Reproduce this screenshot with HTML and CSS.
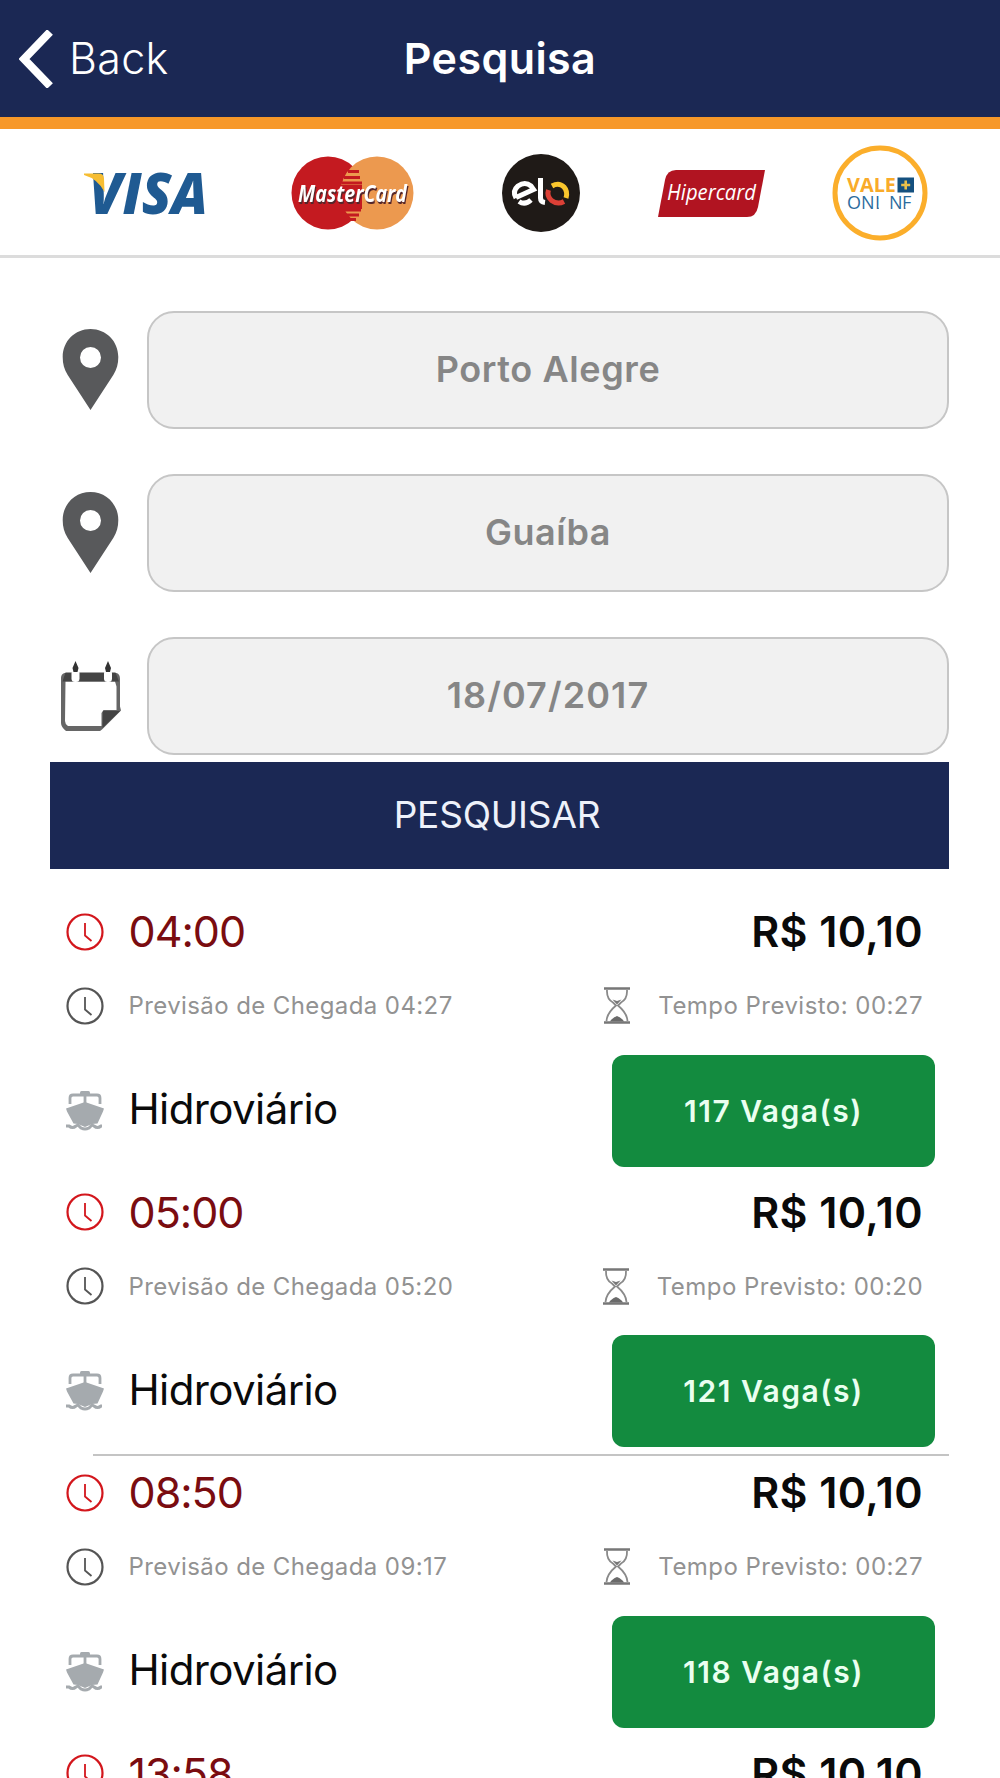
FILE: index.html
```html
<!DOCTYPE html>
<html lang="pt-BR">
<head>
<meta charset="utf-8">
<title>Pesquisa</title>
<link rel="stylesheet" href="styles.css">
</head>
<body>
<svg class="sprite" aria-hidden="true">
  <symbol id="pin" viewBox="0 0 56 82">
    <path fill-rule="evenodd" d="M28 0C12.500 0 .2 12 .2 28c0 7 1.500 12 5 18L28 81l22.800-35c3.500-6 5-11 5-18C55.800 12 43.500 0 28 0zM28 18a10.500 10.500 0 1 1 0 21a10.500 10.500 0 1 1 0-21z"/>
  </symbol>
  <symbol id="calendar" viewBox="0 0 62 70">
    <path d="M4.500 12h52q3.500 1 3.500 6v27.500l1 4L42 68.500 40 70H6Q1 66 1 62V17q0-4 3.500-5z" fill="#666"/>
    <path d="M5.500 20.500h49.500l1.500 5V49H43.500l-2 3v13H8Q5 63 5 60z" fill="#fff"/>
    <path d="M5.500 11.500h50l3.500 9H2.500z" fill="#444"/>
    <path d="M43 50h17L42.500 67z" fill="#444"/>
    <rect x="11.500" y="9" width="8" height="12" rx="3.500" fill="#fff"/>
    <rect x="44" y="9" width="8" height="12" rx="3.500" fill="#fff"/>
    <path d="M15.500 0l3 7-1 4h-4l-1-4zM48 0l3 7-1 4h-4l-1-4z" fill="#333"/>
  </symbol>
  <symbol id="clock" viewBox="0 0 38 38">
    <circle cx="19" cy="19" r="17.500" fill="none" stroke="currentColor" stroke-width="2.200"/>
    <path d="M19 10v12.500l6.500 5.500" fill="none" stroke="currentColor" stroke-width="1.800"/>
  </symbol>
  <symbol id="hourglass" viewBox="0 0 26 37">
    <path d="M0 1.500h26M0 35.500h26" stroke="#777" stroke-width="2.600"/>
    <path d="M3 3Q2.500 12 9 15.500l3 3Q3 26 2.500 34M23 3Q23.500 12 17 15.500l-3 3Q23 26 23.500 34" fill="none" stroke="#8a8a8a" stroke-width="1.800"/>
    <path d="M8.500 12.500l4.500 1.500 4.500-1.500-4.500 5z" fill="#777"/>
    <path d="M6 34.500Q8 31 13 29q5 2 7 5.500z" fill="#6a6a6a"/>
  </symbol>
  <symbol id="boat" viewBox="0 0 38 40">
    <path d="M4 13V7q0-3 3-3h24q3 0 3 3v6M19 3v10" fill="none" stroke="currentColor" stroke-width="2.800"/>
    <rect x="14" y="0" width="10" height="5" rx="1.500" fill="currentColor"/>
    <path d="M0 17.500L19 11l19 6.500-1 3-5.500 12L26 33l-7 3-7-3-4.500-.5L1 20.500z" fill="currentColor"/>
    <path d="M0 35h3q3.500 3 7 0l2-1 3 3q4 2 8 0l3-3 2 1q3.500 3 7 0h1" fill="none" stroke="currentColor" stroke-width="3"/>
  </symbol>
</svg>

<header class="topbar">
  <a class="back"><svg class="chevron" viewBox="0 0 34 58"><path d="M31 2L5 29l26 27" fill="none" stroke="#fff" stroke-width="8"/></svg><span class="back-text">Back</span></a>
  <h1 class="title">Pesquisa</h1>
</header>

<section class="cards">
  <svg class="visa" viewBox="0 0 120 41">
    <text class="visa-word" x="5" y="41" textLength="119" lengthAdjust="spacingAndGlyphs">VISA</text>
    <path d="M0 .5h15q4.500 0 5 5L20.500 19Q14 6 0 2z" fill="#f6bd32"/>
  </svg>
  <svg class="mastercard" viewBox="0 0 123 74">
    <circle cx="37" cy="37" r="36.500" fill="#c41a20"/>
    <circle cx="86" cy="37" r="36.500" fill="#ec994f"/>
    <path d="M57 15.500h11M53 21.500h16M51 27h20M52 54h18M55 59h13M59 63.500h6" stroke="#c41a20" stroke-width="2.800"/>
    <path d="M50 29h21v24H50z" fill="#c41a20"/>
    <text class="mc-word" x="7" y="46" textLength="109" lengthAdjust="spacingAndGlyphs">MasterCard</text>
  </svg>
  <svg class="elo" viewBox="0 0 78 78">
    <circle cx="39" cy="39" r="39" fill="#1f1a17"/>
    <g fill="none" stroke-width="5">
      <path d="M14 44Q10 37 16 32q7-5 13 0l2.500 3.500L14 43.500M17 47.500q6 4 12-1.500" stroke="#fff"/>
      <path d="M38.500 24v20q0 4 4.500 4.500" stroke="#fff"/>
      <path d="M50 32q7-4 12 1 4 4.500 2 11" stroke="#fac62d"/>
      <path d="M46.500 36q-2 6 3 10.500 6 4.500 12.500 1" stroke="#dc4036"/>
    </g>
  </svg>
  <svg class="hipercard" viewBox="0 0 107 47">
    <path d="M18 0h89l-7 37q-2 10-11 10H0L7 10Q9 0 18 0z" fill="#b11421"/>
    <text class="hiper-word" x="9" y="30" textLength="89" lengthAdjust="spacingAndGlyphs">Hipercard</text>
  </svg>
  <svg class="vale" viewBox="0 0 96 96">
    <circle cx="48" cy="48" r="45" fill="none" stroke="#fbae2b" stroke-width="5"/>
    <text class="vale-word" x="15" y="46.500" textLength="49" lengthAdjust="spacingAndGlyphs">VALE</text>
    <rect x="65.500" y="32.500" width="16.500" height="15" fill="#14507f"/>
    <path d="M73.700 35.500v9M69.200 40h9" stroke="#e9c04a" stroke-width="2.600"/>
    <text class="online-word" x="15 29 43 51 57 70" y="64">ONLINE</text>
    <path d="M46.800 60.500h4.700v5h-4.700zM51.500 49h4.500v16h-4.500zM73.500 61h9v4h-9z" fill="#fff"/>
  </svg>
</section>

<form class="search">
  <div class="field"><svg class="pin"><use href="#pin"/></svg><div class="box">Porto Alegre</div></div>
  <div class="field"><svg class="pin"><use href="#pin"/></svg><div class="box">Guaíba</div></div>
  <div class="field"><svg class="calendar"><use href="#calendar"/></svg><div class="box date">18/07/2017</div></div>
  <button class="submit" type="button">PESQUISAR</button>
</form>

<main class="trips">
  <article class="trip">
    <div class="row"><svg class="clock red"><use href="#clock"/></svg><span class="time">04:00</span><span class="price">R$ 10,10</span></div>
    <div class="row info"><svg class="clock"><use href="#clock"/></svg><span class="arrival">Previsão de Chegada 04:27</span><svg class="hourglass"><use href="#hourglass"/></svg><span class="duration">Tempo Previsto: 00:27</span></div>
    <div class="row mode"><svg class="boat"><use href="#boat"/></svg><span class="mode-name">Hidroviário</span><button class="seats" type="button">117 Vaga(s)</button></div>
  </article>
  <article class="trip divided">
    <div class="row"><svg class="clock red"><use href="#clock"/></svg><span class="time">05:00</span><span class="price">R$ 10,10</span></div>
    <div class="row info"><svg class="clock"><use href="#clock"/></svg><span class="arrival">Previsão de Chegada 05:20</span><svg class="hourglass"><use href="#hourglass"/></svg><span class="duration">Tempo Previsto: 00:20</span></div>
    <div class="row mode"><svg class="boat"><use href="#boat"/></svg><span class="mode-name">Hidroviário</span><button class="seats" type="button">121 Vaga(s)</button></div>
  </article>
  <article class="trip">
    <div class="row"><svg class="clock red"><use href="#clock"/></svg><span class="time">08:50</span><span class="price">R$ 10,10</span></div>
    <div class="row info"><svg class="clock"><use href="#clock"/></svg><span class="arrival">Previsão de Chegada 09:17</span><svg class="hourglass"><use href="#hourglass"/></svg><span class="duration">Tempo Previsto: 00:27</span></div>
    <div class="row mode"><svg class="boat"><use href="#boat"/></svg><span class="mode-name">Hidroviário</span><button class="seats" type="button">118 Vaga(s)</button></div>
  </article>
  <article class="trip">
    <div class="row"><svg class="clock red"><use href="#clock"/></svg><span class="time">13:58</span><span class="price">R$ 10,10</span></div>
  </article>
</main>
</body>
</html>
```
FILE: styles.css
```css
* { box-sizing: border-box; }
body {
  display: flex;
  flex-direction: column;
  margin: 0;
  width: 1000px;
  height: 1778px;
  overflow: hidden;
  background: #fff;
  font-family: Inter, "Liberation Sans", sans-serif;
  color: #0a0a0a;
}
svg { display: block; flex: none; }
.sprite { display: none; }

.topbar {
  display: grid;
  flex: none;
  grid-template-columns: 1fr auto 1fr;
  align-items: center;
  height: 129px;
  padding-left: 19px;
  background: #1b2854;
  border-bottom: 12px solid #f79829;
  color: #fff;
}
.back { display: flex; align-items: center; gap: 16px; font-size: 43px; font-weight: 350; letter-spacing: .3px; }
.back-text, .title { padding-bottom: 2px; }
.chevron { width: 34px; height: 58px; }
.title { margin: 0 19px 0 0; font-size: 43px; font-weight: 600; letter-spacing: .4px; }

.cards {
  display: flex;
  flex: none;
  align-items: center;
  height: 129px;
  padding: 1px 0 0 84px;
  border-bottom: 3px solid #dcdcdc;
}
.cards svg { overflow: visible; }
.visa { width: 120px; height: 41px; margin: 2px 87px 0 0; }
.mastercard { width: 123px; height: 74px; margin-right: 88px; }
.elo { width: 78px; height: 78px; margin-right: 78px; }
.hipercard { width: 107px; height: 47px; margin: 1px 67px 0 0; }
.vale { width: 96px; height: 96px; }
.visa-word { font: italic 800 56px "Open Sans", sans-serif; fill: #1f5a92; }
.mc-word { font: italic 700 24px "Open Sans", sans-serif; fill: #fff; filter: drop-shadow(1px 2px 0 #54262a); }
.hiper-word { font: italic 500 22px "Open Sans", sans-serif; fill: #fff; }
.vale-word { font: 700 19px "Open Sans", sans-serif; fill: #f9ab2a; }
.online-word { font: 400 18px "Open Sans", sans-serif; fill: #2c6c9e; }

.search { display: flex; flex: none; flex-direction: column; padding: 53px 51px 0 50px; }
.field { display: flex; align-items: center; justify-content: space-between; height: 118px; margin-bottom: 45px; padding-left: 10px; }
.field:nth-child(3) { margin-bottom: 7px; }
.pin { width: 61px; height: 82px; fill: #58595b; }
.calendar { width: 62px; height: 70px; }
.box {
  display: flex;
  align-items: center;
  justify-content: center;
  width: 802px;
  height: 118px;
  padding-bottom: 2px;
  border: 2px solid #c6c6c6;
  border-radius: 27px;
  background: #f1f1f1;
  color: #868686;
  font-size: 36px;
  font-weight: 600;
  letter-spacing: .6px;
}
.date { letter-spacing: 1.1px; }
.submit {
  height: 107px;
  padding: 0 5px 2px 0;
  border: 0;
  background: #1b2854;
  color: #eef1fa;
  font: 400 37px Inter, sans-serif;
  letter-spacing: -.2px;
}

.trips { flex: 1; min-height: 0; overflow: hidden; padding: 26px 51px 0 50px; }
.trip { display: flex; flex-direction: column; height: 280.6px; padding: 0 26px 0 16px; }
.trip:last-child { height: 41px; }
.divided {
  background: linear-gradient(#c4c4c4, #c4c4c4) 43px 100% / 100% 2px no-repeat;
}
.row { display: flex; flex: none; align-items: center; height: 73px; }
.info { height: 75px; color: #929292; font-size: 24px; }
.mode { height: 132px; padding-top: 3px; }
.clock { width: 38px; height: 38px; margin-right: 24.5px; color: #555; }
.red { color: #d3161c; }
.time { padding-bottom: 1px; font-size: 43px; letter-spacing: -1px; color: #7a0c10; }
.price { margin-left: auto; padding-bottom: 1px; font-size: 43px; font-weight: 600; letter-spacing: .4px; }
.arrival { letter-spacing: .4px; }
.duration { letter-spacing: .46px; }
.hourglass { width: 26px; height: 37px; margin-left: auto; margin-right: 28px; }
.boat { width: 38px; height: 40px; margin-right: 24.5px; color: #a5aaae; }
.mode-name { padding-bottom: 4px; font-size: 42px; letter-spacing: -.6px; }
.seats {
  width: 323px;
  height: 112px;
  margin: 0 -12px 0 auto;
  padding: 0;
  border: 0;
  border-radius: 12px;
  background: #138b3f;
  color: #eafff0;
  font: 600 30px Inter, sans-serif;
  letter-spacing: 1.5px;
}
```
